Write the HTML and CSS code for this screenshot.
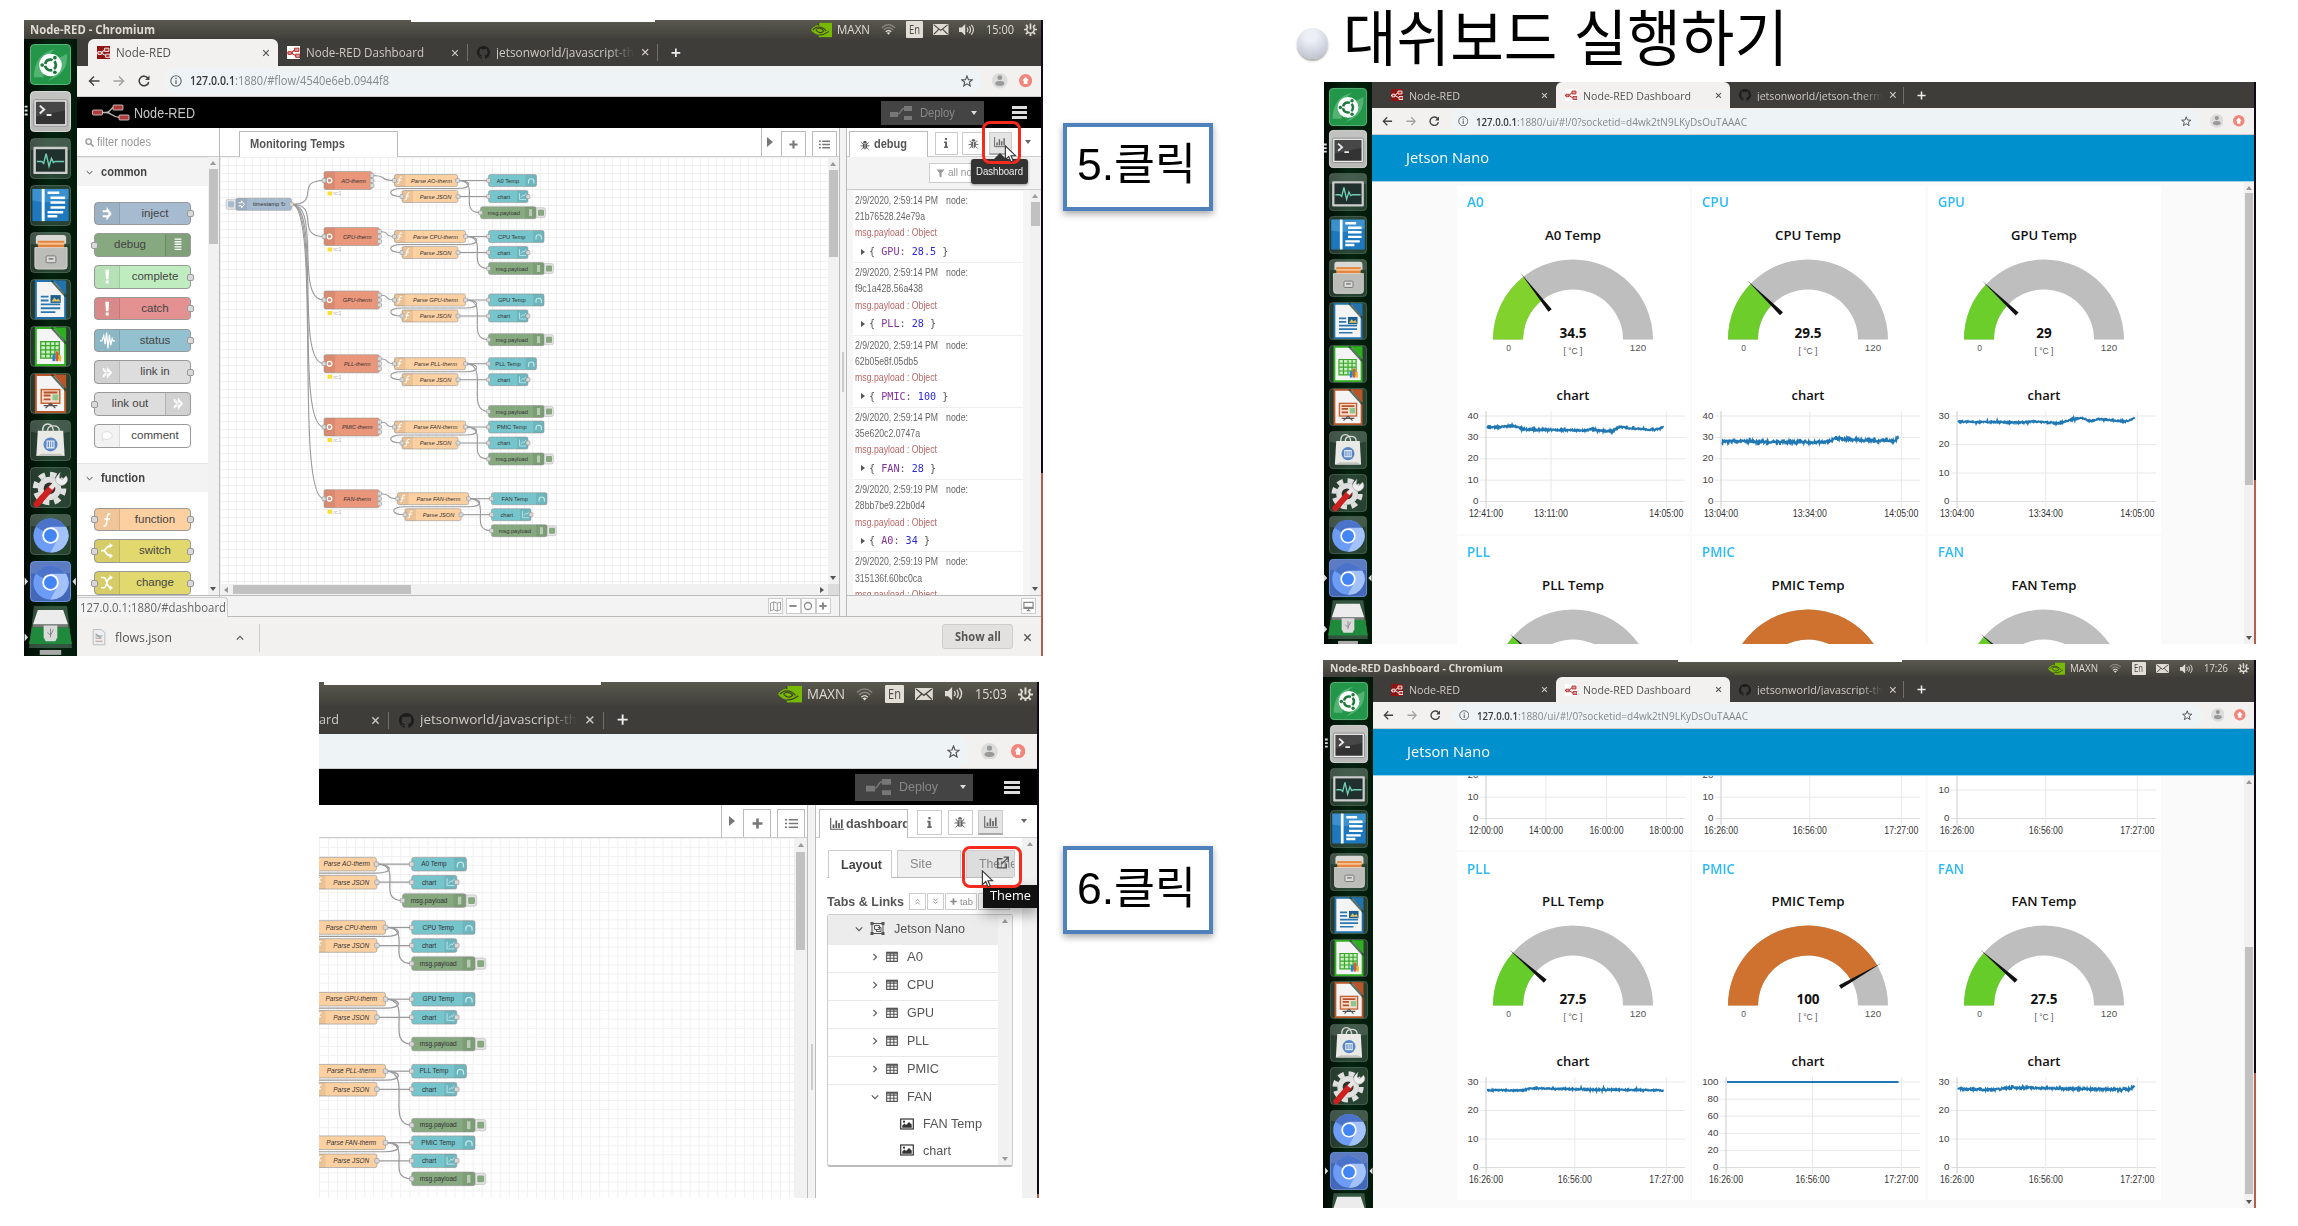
FILE: index.html
```html
<!DOCTYPE html>
<html lang="ko">
<head>
<meta charset="utf-8">
<title>대쉬보드 실행하기</title>
<link rel="stylesheet" href="styles.css">
</head>
<body>
<main class="slide">

  <section class="win win-editor">
    <header class="titlebar"><i class="strip"></i><b class="fit" data-w="125">Node-RED - Chromium</b><div class="indicators" data-time="15:00"></div></header>
    <div class="desk">
      <nav class="launcher"></nav>
      <div class="browser">
        <div class="tabs" data-tabs="editor"></div>
        <div class="toolbar" data-url="/#flow/4540e6eb.0944f8" data-host-w="45" data-path-w="154"></div>
        <div class="nr-header">
          <svg class="nr-logo" width="38" height="17" viewBox="0 0 38 17"><path d="M9 8.500H14C19 8.500 18 3.500 22 3.500M14 8.500C20 8.500 20 13.500 28 13.500" fill="none" stroke="#bbb" stroke-width="1.400"/><g fill="#b03a3a" stroke="#ddd" stroke-width=".8"><rect x=".5" y="6" width="10" height="5" rx="1"/><rect x="21" y="1" width="10" height="5" rx="1"/><rect x="27" y="11" width="10" height="5" rx="1"/></g></svg>
          <span class="fit" data-w="61">Node-RED</span>
          <div class="deploy"><i class="d-ico" data-ico="deploy" data-s="22"></i><span class="fit" data-w="35">Deploy</span><i class="caret"></i></div>
          <i class="burger"></i>
        </div>
        <div class="nr-main">
          <aside class="palette">
            <div class="search"><i data-ico="search" data-s="9"></i><span class="fit" data-w="54">filter nodes</span></div>
            <div class="pal-body">
              <div class="pal-list"></div>
              <div class="vscroll"><i class="up"></i><i class="thumb"></i><i class="down"></i></div>
            </div>
            <div class="foot"></div>
          </aside>
          <div class="workspace">
            <div class="ws-tabs"><div class="ws-tab"><b class="fit" data-w="95">Monitoring Temps</b></div><div class="ws-btns"><i class="tri"></i><div class="wbtn" data-ico="plus" data-s="9"></div><div class="wbtn" data-ico="list" data-s="11"></div></div></div>
            <div class="ws-body"><svg class="canvas"></svg><div class="vscroll"><i class="up"></i><i class="thumb"></i><i class="down"></i></div></div>
            <div class="hscroll"><i class="left"></i><i class="thumb"></i><i class="right"></i><i class="corner"></i></div>
            <div class="foot"><div class="fbtn" data-ico="map" data-s="11"></div><div class="fgroup"><div class="fbtn" data-ico="minus" data-s="8"></div><div class="fbtn" data-ico="ring" data-s="10"></div><div class="fbtn" data-ico="plus" data-s="8"></div></div></div>
          </div>
          <div class="divider"><i></i></div>
          <aside class="sidebar">
            <div class="sb-tabs"><div class="sb-tab"><i data-ico="bug" data-s="10"></i><b class="fit" data-w="33">debug</b></div><div class="sbtn" data-ico="info" data-s="10"></div><div class="sbtn" data-ico="bug" data-s="11"></div><div class="sbtn on" data-ico="bars" data-s="12"></div><i class="caret"></i></div>
            <div class="filter"><div><i data-ico="funnel" data-s="9"></i><span class="fit" data-w="24">all no</span></div></div>
            <div class="dbg"><div class="messages"></div><div class="vscroll"><i class="up"></i><i class="thumb"></i><i class="down"></i></div></div>
            <div class="foot"><div class="fbtn" data-ico="screen" data-s="11"></div></div>
          </aside>
        </div>
        <div class="downloads"><i data-ico="file" data-s="14"></i><span class="fit" data-w="57">flows.json</span><i class="chev" data-ico="chevup" data-s="8"></i><i class="sep"></i><div class="showall"><b class="fit" data-w="46">Show all</b></div><i data-ico="close" data-s="9"></i></div>
        <div class="bubble"><span class="fit" data-w="146">127.0.0.1:1880/#dashboard</span></div>
      </div>
    </div>
    <div class="tip tip-dash"><span class="fit" data-w="47">Dashboard</span></div>
    <div class="mark mark-5"></div>
    <i class="cursor cursor-5" data-ico="cursor" data-s="18"></i>
  </section>

  <section class="win win-side">
    <header class="titlebar"><i class="strip"></i><div class="indicators" data-time="15:03"></div></header>
    <div class="browser">
      <div class="tabs" data-tabs="side"></div>
      <div class="toolbar bare"></div>
      <div class="nr-header"><div class="deploy"><i class="d-ico" data-ico="deploy" data-s="25"></i><span class="fit" data-w="39">Deploy</span><i class="caret"></i></div><i class="burger"></i></div>
      <div class="nr-main">
        <div class="workspace">
          <div class="ws-tabs"><div class="ws-btns"><i class="tri"></i><div class="wbtn" data-ico="plus" data-s="11"></div><div class="wbtn" data-ico="list" data-s="13"></div></div></div>
          <div class="ws-body"><svg class="canvas"></svg><div class="vscroll"><i class="up"></i><i class="thumb"></i></div></div>
        </div>
        <div class="divider"><i></i></div>
        <aside class="sidebar">
          <div class="sb-tabs"><div class="sb-tab"><i data-ico="bars" data-s="14"></i><b class="fit" data-w="64">dashboard</b></div><div class="sbtn" data-ico="info" data-s="11"></div><div class="sbtn" data-ico="bug" data-s="12"></div><div class="sbtn on" data-ico="bars" data-s="14"></div><i class="caret"></i></div>
          <div class="sb-body">
            <div class="sb-panel">
              <div class="ltabs"><div class="ltab act"><b class="fit" data-w="41">Layout</b></div><div class="ltab"><span class="fit" data-w="22">Site</span></div><div class="ltab hov"><span class="fit" data-w="38">Theme</span><i data-ico="ext" data-s="13"></i></div></div>
              <div class="links"><b class="fit" data-w="77">Tabs &amp; Links</b><div class="lbtn" data-ico="dup" data-s="7"></div><div class="lbtn" data-ico="ddown" data-s="7"></div><div class="lbtn wide"><i data-ico="plus" data-s="7"></i><span class="fit" data-w="13">tab</span></div><div class="lbtn wide"></div></div>
              <div class="tree">
                <div class="rows">
                  <div class="row root"><i data-ico="chevdown" data-s="8"></i><i data-ico="group" data-s="15"></i><span class="fit" data-w="71">Jetson Nano</span></div>
                  <div class="row"><i data-ico="chevright" data-s="8"></i><i data-ico="table" data-s="12"></i><span class="fit" data-w="16">A0</span></div>
                  <div class="row"><i data-ico="chevright" data-s="8"></i><i data-ico="table" data-s="12"></i><span class="fit" data-w="27">CPU</span></div>
                  <div class="row"><i data-ico="chevright" data-s="8"></i><i data-ico="table" data-s="12"></i><span class="fit" data-w="27">GPU</span></div>
                  <div class="row"><i data-ico="chevright" data-s="8"></i><i data-ico="table" data-s="12"></i><span class="fit" data-w="22">PLL</span></div>
                  <div class="row"><i data-ico="chevright" data-s="8"></i><i data-ico="table" data-s="12"></i><span class="fit" data-w="32">PMIC</span></div>
                  <div class="row open"><i data-ico="chevdown" data-s="8"></i><i data-ico="table" data-s="12"></i><span class="fit" data-w="25">FAN</span></div>
                  <div class="row leaf"><i data-ico="image" data-s="14"></i><span class="fit" data-w="59">FAN Temp</span></div>
                  <div class="row leaf"><i data-ico="image" data-s="14"></i><span class="fit" data-w="28">chart</span></div>
                </div>
                <div class="vscroll"><i class="up"></i><i class="down"></i></div>
              </div>
            </div>
            <div class="vscroll"><i class="up"></i></div>
          </div>
        </aside>
      </div>
    </div>
    <div class="tip tip-theme"><span class="fit" data-w="41">Theme</span></div>
    <div class="mark mark-6"></div>
    <i class="cursor cursor-6" data-ico="cursor" data-s="18"></i>
  </section>

  <div class="callout c5"><span class="fit" data-w="119">5.클릭</span></div>
  <div class="callout c6"><span class="fit" data-w="119">6.클릭</span></div>

  <h1 class="heading"><i class="ball"></i><span class="fit" data-w="445">대쉬보드 실행하기</span></h1>

  <section class="win win-dash top">
    <div class="desk">
      <nav class="launcher"></nav>
      <div class="browser">
        <div class="tabs" data-tabs="dash1"></div>
        <div class="toolbar" data-url="/ui/#!/0?socketid=d4wk2tN9LKyDsOuTAAAC" data-host-w="41" data-path-w="230"></div>
        <div class="ui-header"><span class="fit" data-w="83">Jetson Nano</span></div>
        <div class="ui-body"><div class="cards" data-cards="first"></div><div class="vscroll"><i class="up"></i><i class="thumb"></i><i class="down"></i></div></div>
      </div>
    </div>
  </section>

  <section class="win win-dash bottom">
    <header class="titlebar"><i class="strip"></i><b class="fit" data-w="173">Node-RED Dashboard - Chromium</b><div class="indicators" data-time="17:26"></div></header>
    <div class="desk">
      <nav class="launcher"></nav>
      <div class="browser">
        <div class="tabs" data-tabs="dash2"></div>
        <div class="toolbar" data-url="/ui/#!/0?socketid=d4wk2tN9LKyDsOuTAAAC" data-host-w="41" data-path-w="230"></div>
        <div class="ui-header"><span class="fit" data-w="83">Jetson Nano</span></div>
        <div class="ui-body"><div class="cards" data-cards="second"></div><div class="vscroll"><i class="up"></i><i class="thumb"></i><i class="down"></i></div></div>
      </div>
    </div>
  </section>
</main>
<script src="app.js"></script>
</body>
</html>
```
FILE: styles.css
```css
* { box-sizing: border-box; }
body { margin: 0; background: #fff; font-family: "Liberation Sans", "Noto Sans CJK KR", sans-serif; line-height: 1; }
i { font-style: normal; display: block; flex: none; }
svg { display: block; flex: none; }
.fit { display: inline-block; white-space: nowrap; transform-origin: 0 50%; flex: none; }
.slide { position: relative; width: 2298px; height: 1226px; overflow: hidden; }

/* Screens placed on the slide */
.win { position: absolute; display: flex; flex-direction: column; overflow: hidden; background: #fff; }
.win::after { content: ""; position: absolute; right: 0; top: 0; bottom: 0; width: 2px; background: linear-gradient(#100814 0 var(--edge), #b0604c var(--edge)); }
.win-editor { left: 24px; top: 20px; width: 1019px; height: 636px; --edge: 453px; --tile: 41px; --tgap: 6px; --tabw: 190px; --fs: 12px; }
.win-side { left: 319px; top: 682px; width: 720px; height: 516px; --edge: 512px; --tabw: 215px; --fs: 13.5px; }
.win-dash { left: 1324px; width: 932px; --tile: 38px; --tgap: 4.9px; --tabw: 174px; --fs: 11px; }
.win-dash.top { top: 82px; height: 562px; --edge: 398px; }
.win-dash.bottom { left: 1323px; top: 660px; width: 933px; height: 548px; --edge: 413px; --tgap: 4.75px; }

.titlebar { position: relative; flex: none; height: 19px; display: flex; align-items: center; padding: 0 6px; background: linear-gradient(#5a594f, #403f3a); color: #dfdbd2; font: 12px/1 "Open Sans", "Noto Sans", sans-serif; }
.titlebar b { font-weight: 700; }
.strip { position: absolute; top: 0; height: 2px; background: #fff; }
.win-editor .strip { left: 387px; width: 244px; }
.win-side .strip { left: 5px; width: 277px; top: 0; height: 3px; }
.win-side .titlebar { height: 24px; }
.bottom .strip { left: 355px; width: 224px; }
.bottom .titlebar { height: 17px; font-size: 10.5px; padding: 0 7px; }
.indicators { margin-left: auto; display: flex; align-items: center; gap: 12px; }
.en { background: #e3dfd7; color: #4a4943; border-radius: 1px; display: flex; align-items: center; justify-content: center; }

.desk { flex: 1; display: flex; min-height: 0; }
.browser { position: relative; flex: 1; min-width: 0; display: flex; flex-direction: column; }
.launcher { position: relative; flex: none; width: 53px; background: linear-gradient(90deg, #010a04, #04240f 50%, #03190a); display: flex; flex-direction: column; gap: var(--tgap); padding: 5px 0 0 6px; overflow: hidden; }
.top .launcher { width: 48px; padding: 5.500px 0 0 5px; }
.bottom .launcher { width: 50px; padding: 5px 0 0 7px; }
.launcher svg { width: var(--tile); height: var(--tile); overflow: visible; }

.tabs { flex: none; height: 27px; display: flex; background: #3e3d39; color: #cdcac3; font: var(--fs)/1 "Open Sans", "Noto Sans", sans-serif; padding-left: 11px; }
.win-side .tabs { height: 28px; padding: 0; }
.top .tabs { height: 26px; padding-left: 10px; }
.bottom .tabs { height: 25px; padding-left: 9px; }
.tab { flex: none; width: var(--tabw); display: flex; align-items: center; gap: 6px; padding: 0 8px 0 9px; border-radius: 6px 6px 0 0; }
.tab.active { background: #f2f1f0; color: #55534e; }
.tab.line { border-right: 1px solid #706f68; border-radius: 0; height: 17px; align-self: center; }
.tab .x { margin-left: auto; }
.tab.first-cut { width: 70px; padding-left: 0; }
.win-side .tab.line { padding-left: 10px; }
.win-side .tab.first-cut { padding-left: 0; }
.fade { -webkit-mask-image: linear-gradient(90deg, #000 82%, transparent); mask-image: linear-gradient(90deg, #000 82%, transparent); }
.newtab { margin-left: 13px; align-self: center; color: #fff; }

.toolbar { flex: none; height: 31px; background: #f2f1f0; display: flex; align-items: center; border-bottom: 1px solid #ccc; font: var(--fs)/1 "Open Sans", "Noto Sans", sans-serif; padding-left: 4px; color: #444; }
.nav { width: 25px; display: flex; justify-content: center; }
.nav.off { opacity: .45; }
.addr { flex: none; width: 817px; height: 27px; margin-left: 9px; border-radius: 14px; background: #eef3f5; display: flex; align-items: center; padding: 0 9px 0 5px; color: #84898c; }
.addr b { color: #3a3a3a; font-weight: 600; margin-left: 7.500px; }
.addr .star { margin-left: auto; }
.avatar { margin-left: 10px; }
.upd { margin-left: 11px; }
.win-side .toolbar { height: 35px; padding: 0; }
.win-side .addr { width: 650px; margin: 0; height: 34px; border-radius: 0 17px 17px 0; }
.win-side .avatar { margin-left: 12px; }
.win-side .upd { margin-left: 13px; }
.win-dash .toolbar { height: 27px; }
.win-dash .nav { width: 23.2px; }
.win-dash .addr { width: 750px; margin-left: 5px; height: 23px; padding-left: 7px; }
.win-dash .avatar { margin-left: 9px; }
.win-dash .upd { margin-left: 10px; }

/* Flow editor */
.nr-header { flex: none; height: 31px; background: #000; color: #c7c7c7; display: flex; align-items: center; padding: 0 16px 0 15px; font-size: 14px; }
.nr-header > .fit { margin-left: 4px; }
.deploy { margin-left: auto; width: 103px; height: 24px; background: #444; color: #888; display: flex; align-items: center; padding: 0 7px 0 9px; font-size: 13.5px; }
.d-ico { margin-right: 8px; color: #777; }
.caret { width: 0; height: 0; border: 3.5px solid transparent; border-top: 4px solid currentColor; border-bottom: 0; margin-left: auto; }
.deploy .caret { color: #ddd; }
.burger { margin-left: 28px; width: 15px; height: 13px; background: repeating-linear-gradient(#ddd 0 2.6px, transparent 2.6px 5.200px); }
.win-side .nr-header { height: 36px; padding-right: 19px; }
.win-side .deploy { width: 118px; height: 27px; padding-left: 11px; font-size: 13.5px; }
.win-side .burger { margin-left: 31px; width: 16px; }
.nr-main { flex: 1; min-height: 0; display: flex; }
.win-editor .nr-main { flex: none; height: 489px; border-bottom: 1px solid #bbb; }
.palette { flex: none; width: 142.500px; border-right: 1px solid #bbb; display: flex; flex-direction: column; }
.search { flex: none; height: 29px; border-bottom: 1px solid #ccc; display: flex; align-items: center; gap: 3px; padding-left: 8px; color: #999; font-size: 12px; }
.pal-body { flex: 1; min-height: 0; display: flex; }
.pal-list { flex: 1; overflow: hidden; }
.foot { flex: none; height: 21px; background: #f3f3f3; border-top: 1px solid #bbb; display: flex; align-items: center; justify-content: flex-end; gap: 3px; }
.workspace .foot { padding-right: 8px; }
.sidebar .foot { padding-right: 5px; }
.fbtn { width: 15px; height: 16px; border: 1px solid #ccc; background: #fff; display: flex; align-items: center; justify-content: center; color: #888; }
.fgroup { display: flex; }
.cat { height: 29px; background: #f3f3f3; display: flex; align-items: center; gap: 8px; padding-left: 9px; font-size: 12.5px; font-weight: 700; color: #444; border-top: 1px solid #e6e6e6; }
.pnodes { display: flex; flex-direction: column; gap: 8.3px; padding: 15.5px 0 15.5px 17px; }
.pn { position: relative; width: 97px; height: 23.5px; border: 1.2px solid #999; border-radius: 4px; display: flex; align-items: stretch; font-size: 11.500px; color: #444; }
.pn .pi { width: 25px; background: rgba(0,0,0,.05); border-right: 1px solid rgba(0,0,0,.1); display: flex; align-items: center; justify-content: center; color: #fff; }
.pn.r { flex-direction: row-reverse; }
.pn.r .pi { border-right: 0; border-left: 1px solid rgba(0,0,0,.15); }
.pn .pl { flex: 1; display: flex; align-items: center; justify-content: center; }
.port { position: absolute; top: 7.5px; width: 7px; height: 7px; border: 1px solid #999; border-radius: 2px; background: #d9d9d9; }
.port.in { left: -4px; } .port.out { right: -4px; }

.vscroll { flex: none; width: 11px; background: #f1f1f1; display: flex; flex-direction: column; align-items: center; padding: 4px 0; }
.vscroll .up, .vscroll .down { width: 0; height: 0; border: 3px solid transparent; }
.vscroll .up { border-bottom: 4px solid #999; border-top: 0; }
.vscroll .down { border-top: 4px solid #555; border-bottom: 0; margin-top: auto; }
.vscroll .thumb { width: 9px; background: #c1c1c1; margin-top: 4px; }
.palette .thumb { height: 75px; } .workspace .thumb { height: 87px; }
.workspace { flex: none; width: 620px; display: flex; flex-direction: column; border-right: 1px solid #bbb; }
.ws-tabs { flex: none; height: 29px; border-bottom: 1px solid #ccc; display: flex; align-items: flex-end; padding-left: 19px; }
.ws-tab { width: 159px; height: 26px; border: 1px solid #bbb; border-bottom: 0; background: #fff; margin-bottom: -1px; display: flex; align-items: center; padding-left: 10px; font-size: 12.5px; color: #555; }
.ws-btns { margin-left: auto; height: 28px; border-left: 1px solid #bbb; display: flex; align-items: flex-end; padding: 0 2px 0 5px; }
.tri { width: 0; height: 0; border: 5px solid transparent; border-left: 6px solid #777; border-right: 0; align-self: center; margin-right: 8px; }
.wbtn { width: 25px; height: 25px; border: 1px solid #bbb; border-bottom: 0; margin-right: 6px; display: flex; align-items: center; justify-content: center; color: #777; }
.wbtn:last-child { margin-right: 0; }
.ws-body { flex: 1; min-height: 0; display: flex; }
.canvas { flex: 1; height: 100%; min-width: 0; }
.workspace .vscroll { padding-top: 5px; }
.hscroll { flex: none; height: 11px; background: #f1f1f1; display: flex; align-items: center; padding-left: 4px; }
.hscroll .left, .hscroll .right { width: 0; height: 0; border: 3px solid transparent; }
.hscroll .left { border-right: 4px solid #999; border-left: 0; }
.hscroll .right { border-left: 4px solid #555; border-right: 0; margin-left: auto; margin-right: 4px; }
.hscroll .thumb { width: 178px; height: 9px; background: #c1c1c1; margin-left: 5px; }
.corner { width: 11px; height: 11px; background: #dcdcdc; }
.divider { flex: none; width: 7px; background: #f3f3f3; display: flex; align-items: center; justify-content: center; border-right: 1px solid #bbb; }
.divider i { width: 2px; height: 40px; background: #ccc; }
.sidebar { flex: 1; min-width: 0; display: flex; flex-direction: column; padding-right: 2px; }
.sb-tabs { flex: none; height: 29px; border-bottom: 1px solid #ccc; display: flex; align-items: center; padding-left: 2px; color: #666; }
.sb-tab { width: 79px; height: 26px; border: 1px solid #bbb; border-bottom: 0; background: #fff; align-self: flex-end; margin-bottom: -1px; display: flex; align-items: center; gap: 4px; padding-left: 10px; margin-right: 7px; font-size: 12.5px; color: #555; overflow: hidden; }
.sbtn { width: 23px; height: 23px; border: 1px solid #ccc; display: flex; align-items: center; justify-content: center; margin: 2px 4px 0 0; }
.sbtn.on { background: #e4e4e4; border-bottom: 2px solid #aaa; }
.sb-tabs .caret { margin: 0 10px 0 auto; }
.filter { flex: none; height: 33px; background: #f3f3f3; border-bottom: 1px solid #ccc; padding: 6px 0 0 82px; }
.filter div { width: 60px; height: 20px; border: 1px solid #ccc; background: #fff; display: flex; align-items: center; gap: 3px; padding-left: 6px; font-size: 11.5px; color: #999; }
.dbg { flex: 1; min-height: 0; display: flex; background: #f5f5f5; }
.messages { flex: none; width: 170px; margin: 1px 7px 0 6px; background: #fff; overflow: hidden; }
.dbg .thumb { height: 24px; }
.msg { height: 72.3px; border-bottom: 1.500px solid #eee; padding: 2px 0 0 2px; font-size: 10px; line-height: 16.2px; color: #666; }
.msg > div { height: 16.2px; }
.msg .when { display: flex; gap: 8px; }
.msg .type { color: #b66; }
.msg .obj { display: flex; align-items: center; gap: 4px; padding-left: 6px; height: 20px; font: 11px/1 "DejaVu Sans Mono", "Liberation Mono", monospace; color: #555; }
.obj .k { color: #83319b; } .obj .v { color: #2b2bd8; }
.obj i { border: 3px solid transparent; border-left: 4px solid #555; border-right: 0; }
.downloads { flex: 1; background: #f2f1f0; display: flex; align-items: center; padding: 2px 11px 0 15px; font: 13px/1 "Open Sans", "Noto Sans", sans-serif; color: #555; }
.downloads > .fit { margin-left: 9px; }
.downloads .chev { margin-left: 64px; }
.downloads .sep { width: 1px; height: 28px; background: #ccc; margin-left: 15px; }
.showall { margin: -2px 10px 0 auto; width: 71px; height: 25px; border: 1px solid #cfcecc; border-radius: 3px; background: #e2e1df; display: flex; align-items: center; justify-content: center; font-size: 12px; }
.bubble { position: absolute; left: 0; bottom: 39px; width: 151px; height: 20px; background: #f3f3f3; border: 1px solid #ccc; border-width: 1px 1px 0 0; border-radius: 0 4px 0 0; display: flex; align-items: center; padding-left: 3px; font: 12px/1 "Open Sans", "Noto Sans", sans-serif; color: #666; }

/* Overlays on the editor screens */
.tip { position: absolute; display: flex; align-items: center; justify-content: center; color: #eee; }
.tip-dash { left: 947px; top: 139px; width: 57px; height: 25px; border-radius: 3px; background: #333; font-size: 10.500px; box-shadow: 0 1px 3px rgba(0,0,0,.4); }
.tip-dash::before { content: ""; position: absolute; left: 23px; top: -6px; border: 6px solid transparent; border-bottom-color: #333; border-top: 0; }
.tip-theme { left: 664px; top: 203px; width: 55px; height: 23px; background: #111; font: 12.5px/1 "Open Sans", "Noto Sans", sans-serif; color: #fff; box-shadow: 0 6px 14px rgba(0,0,0,.35); }
.mark { position: absolute; border: 3px solid #f52a1e; }
.mark-5 { left: 958px; top: 101px; width: 39px; height: 43px; border-radius: 8px; }
.mark-6 { left: 643px; top: 164px; width: 60px; height: 42px; border-radius: 8px; }
.cursor { position: absolute; }
.cursor-5 { left: 978px; top: 125px; }
.cursor-6 { left: 660px; top: 188px; }

/* Dashboard sidebar */
.win-side .workspace { width: 489px; }
.win-side .ws-tabs { height: 33px; }
.win-side .ws-btns { height: 32px; padding-left: 7px; padding-right: 2px; }
.win-side .wbtn { width: 28px; height: 28px; }
.win-side .vscroll { width: 13px; }
.win-side .workspace .thumb { height: 98px; margin-top: 5px; }
.win-side .divider { width: 8px; }
.win-side .divider i { height: 46px; margin-top: 130px; }
.win-side .sb-tabs { height: 33px; padding-left: 3px; }
.win-side .sb-tab { width: 89px; height: 29px; font-size: 13.5px; gap: 2px; margin-right: 9px; }
.win-side .sbtn { width: 25px; height: 25px; margin-right: 5.5px; }
.sb-body { flex: 1; display: flex; min-height: 0; }
.sb-body > .vscroll { width: 15px; margin-left: auto; }
.sb-panel { width: 197px; padding: 11.500px 0 0 11px; font-size: 13.500px; color: #555; }
.ltabs { display: flex; height: 28.500px; border-bottom: 1px solid #bbb; padding-left: 1px; gap: 5px; }
.ltab { position: relative; width: 64px; border: 1px solid #ccc; border-bottom: 0; background: #f0f0f0; display: flex; align-items: center; padding-left: 12px; overflow: hidden; color: #888; }
.ltab.act { background: #fff; margin-bottom: -1px; color: #444; }
.ltab.hov { width: 49px; background: #ddd; margin-right: -5px; }
.ltab.hov i { position: absolute; left: 29px; top: 5px; color: #555; }
.links { display: flex; align-items: center; height: 17px; margin: 15px 0 4px; gap: 1px; color: #555; }
.links > .fit { position: static; }
.links > .lbtn:nth-child(2) { margin-left: 4px; }
.lbtn { width: 17px; height: 17px; border: 1px solid #ccc; display: flex; align-items: center; justify-content: center; gap: 3px; font-size: 9.5px; color: #888; }
.lbtn.wide { width: 32px; }
.tree { display: flex; width: 186px; height: 253px; border: 1px solid #ccc; border-bottom: 2px solid #bbb; border-radius: 3px; }
.rows { flex: 1; font-size: 13.5px; }
.tree .vscroll { width: 14px; }
.tree .down { border-top-color: #999; }
.row { height: 28px; display: flex; align-items: center; padding: 0 0 3px 43px; border-bottom: 1px solid #e8e8e8; color: #555; }
.row i:first-child { width: 15px; }
.row .fit { margin-left: 9px; }
.row.root { height: 29.500px; background: #ececec; padding: 0 0 2px 27px; border: 0; }
.row.open { height: 26px; border: 0; padding-bottom: 1px; }
.row.leaf { height: 26.5px; border: 0; padding: 0 0 0 72px; }
.row.leaf i:first-child { width: 14px; }

/* Callouts and heading */
.callout { position: absolute; left: 1063px; width: 150px; height: 88px; border: 4px solid #4f81bd; background: #fff; box-shadow: 0 3px 7px rgba(0,0,0,.35); display: flex; align-items: center; padding: 0 0 3px 9.500px; font-size: 44px; color: #000; }
.c5 { top: 122.500px; } .c6 { top: 846px; }
.heading { position: absolute; left: 1297px; top: -4px; height: 76px; margin: 0; display: flex; align-items: center; gap: 15px; font: 400 61px/1 "Noto Sans CJK KR", sans-serif; }
.ball { width: 31px; height: 31px; border-radius: 50%; margin-top: 18px; background: radial-gradient(circle at 45% 25%, #eceff5 0 20%, #d3d7e1 55%, #c3c8d4 75%, #a9adb6); box-shadow: 0 2px 2px #aaa; }

/* Dashboard pages */
.ui-header { flex: none; height: 47px; background: #0090ce; color: #fff; display: flex; align-items: center; padding-left: 34px; font: 14px/1 "Open Sans", "Noto Sans", sans-serif; border-bottom: 1px solid #9fd3ea; }
.ui-body { flex: 1; min-height: 0; overflow: hidden; background: #fafafa; display: flex; justify-content: space-between; padding-right: 2px; }
.cards { flex: none; display: grid; grid-template-columns: repeat(3, 233px); grid-auto-rows: 347.700px; gap: 2.300px; margin: 4px 0 0 85px; align-self: flex-start; }
.bottom .cards { margin: -273.500px 0 0 84px; }
.card { background: #fff; display: flex; flex-direction: column; }
.card h3 { margin: 0; height: 34px; padding-left: 10px; display: flex; align-items: center; font: 600 13.5px/1 "Open Sans", "Noto Sans", sans-serif; color: #2dbbf8; }
.ui-body > .vscroll { width: 10px; align-self: stretch; }
.top .ui-body .thumb { height: 292px; margin-top: 3px; width: 8px; }
.bottom .ui-body .thumb { height: 247px; margin-top: 163px; width: 8px; }
```
FILE: app.js
```js
const BASE = '#d9d9d9';
const ICONS = {
  search: ['0 0 10 10', '<circle cx="4" cy="4" r="3" fill="none" stroke="currentColor" stroke-width="1.500"/><path d="M6.200 6.200L9.500 9.500" stroke="currentColor" stroke-width="1.700"/>'],
  deploy: ['0 0 22 14', '<path d="M0 6H8V11H0ZM14 0H22V5H14ZM14 10H22V14H14Z" fill="currentColor"/><path d="M8 8C11 8 10.500 2.500 14 2.500" fill="none" stroke="currentColor" stroke-width="1.300"/>'],
  plus: ['0 0 10 10', '<path d="M5 .5V9.500M.5 5H9.500" stroke="currentColor" stroke-width="2.400"/>'],
  thinplus: ['0 0 10 10', '<path d="M5 .5V9.500M.5 5H9.500" stroke="#eee" stroke-width="1.700"/>'],
  minus: ['0 0 10 10', '<path d="M.5 5H9.500" stroke="currentColor" stroke-width="2.400"/>'],
  ring: ['0 0 10 10', '<circle cx="5" cy="5" r="3.500" fill="none" stroke="currentColor" stroke-width="1.300"/>'],
  list: ['0 0 12 12', '<path d="M3.500 2.500H12M3.500 6H12M3.500 9.500H12M0 2.500H2M0 6H2M0 9.500H2" stroke="currentColor" stroke-width="1.500"/>'],
  map: ['0 0 12 12', '<path d="M.5 2.500L4 1L8 2.500L11.500 1V9.500L8 11L4 9.500L.5 11ZM4 1V9.500M8 2.500V11" fill="none" stroke="currentColor" stroke-width=".9"/>'],
  bug: ['0 0 12 12', '<path d="M3.800 3.500A2.200 2.500 0 0 1 8.200 3.500Z" fill="currentColor"/><path d="M3.500 4.200H8.500V8.500Q8.500 11 6 11.300Q3.500 11 3.500 8.500Z" fill="currentColor"/><path d="M.5 7H11.500M1.500 3L3.800 5M10.500 3L8.200 5M1.500 11.300L4 9M10.500 11.300L8 9" stroke="currentColor" stroke-width="1"/><path d="M6 4.500V11" stroke="#fff" stroke-width=".8"/>'],
  info: ['0 0 10 10', '<path d="M4 0H6V2H4ZM3 3.500H6V8.500H7V10H3V8.500H4V5H3Z" fill="currentColor"/>'],
  bars: ['0 0 14 12', '<path d="M.7 0V11.300H14" fill="none" stroke="currentColor" stroke-width="1.100"/><path d="M3.500 10V6.500M6.300 10V2.500M9 10V5M11.800 10V1.500" stroke="currentColor" stroke-width="1.700"/>'],
  funnel: ['0 0 10 10', '<path d="M.5 .5H9.500L6.200 4.500V9.800L3.800 8V4.500Z" fill="currentColor"/>'],
  screen: ['0 0 12 12', '<path d="M1 1.500H11V8H1ZM1 7H11M4 10.500H8M6 8V10.500" fill="none" stroke="currentColor" stroke-width="1.300"/>'],
  file: ['0 0 12 14', '<path d="M1 .5H8L11 3V13.500H1Z" fill="#eceff2" stroke="#b9b9b9" stroke-width=".8"/><path d="M3 4L8 8M3 8H8M3 10.500H9" stroke="#b98" stroke-width=".9"/><path d="M3 6H9" stroke="#79a" stroke-width=".8"/>'],
  chevup: ['0 0 10 10', '<path d="M1 7L5 3L9 7" fill="none" stroke="currentColor" stroke-width="1.400"/>'],
  chevdown: ['0 0 10 10', '<path d="M1 3L5 7L9 3" fill="none" stroke="currentColor" stroke-width="1.400"/>'],
  chevright: ['0 0 10 10', '<path d="M3 1L7 5L3 9" fill="none" stroke="currentColor" stroke-width="1.400"/>'],
  dup: ['0 0 10 10', '<path d="M2 5L5 2L8 5M2 9L5 6L8 9" fill="none" stroke="currentColor" stroke-width="1.200"/>'],
  ddown: ['0 0 10 10', '<path d="M2 1L5 4L8 1M2 5L5 8L8 5" fill="none" stroke="currentColor" stroke-width="1.200"/>'],
  close: ['0 0 10 10', '<path d="M1.500 1.500L8.500 8.500M8.500 1.500L1.500 8.500" stroke="currentColor" stroke-width="1.500"/>'],
  cursor: ['0 0 16 16', '<path d="M3 .8V13L6 10.200L8 15L10 14.200L8 9.500H12Z" fill="#fff" stroke="#333" stroke-width="1"/>'],
  ext: ['0 0 12 12', '<path d="M6 2.500H1.500V11H9.500V7M5 7.500L11 1.500M7 1H11.300V5.200" fill="none" stroke="currentColor" stroke-width="1.300"/>'],
  group: ['0 0 15 13', '<path d="M2 1.500H13V11.500H2Z" fill="none" stroke="currentColor" stroke-width="1"/><path d="M4.500 3.500H9.500V7.500H4.500ZM8 5.500H11V9.500H6.500V7.500" fill="none" stroke="currentColor" stroke-width="1"/><path d="M.5 0H3.500V3H.5ZM11.500 0H14.500V3H11.500ZM.5 10H3.500V13H.5ZM11.500 10H14.500V13H11.500Z" fill="currentColor"/>'],
  table: ['0 0 13 12', '<path d="M.7 1.500H12.300V11.300H.7ZM.7 4.500H12.300M.7 7.800H12.300M4.500 1.500V11.300M8.500 1.500V11.300" fill="none" stroke="currentColor" stroke-width="1.200"/><path d="M.5 1H12.500V3H.5Z" fill="currentColor"/>'],
  image: ['0 0 14 12', '<rect x=".7" y="1" width="12.600" height="10" fill="none" stroke="#333" stroke-width="1.200"/><path d="M2.300 9.800V7.500L4.500 5.500L6 7L9 4L11.700 6.500V9.800Z" fill="#333"/><circle cx="4" cy="3.700" r="1.100" fill="#333"/>'],
  back: ['0 0 12 12', '<path d="M11.500 6H1.500M6 1.500L1.500 6L6 10.500" fill="none" stroke="#444" stroke-width="1.500"/>'],
  fwd: ['0 0 12 12', '<path d="M.5 6H10.500M6 1.500L10.500 6L6 10.500" fill="none" stroke="#444" stroke-width="1.500"/>'],
  reload: ['0 0 12 12', '<path d="M10 3.300A4.800 4.800 0 1 0 10.700 7" fill="none" stroke="#444" stroke-width="1.600"/><path d="M11.500 .5V5H7Z" fill="#444"/>'],
  iinfo: ['0 0 12 12', '<circle cx="6" cy="6" r="5.200" fill="none" stroke="#666" stroke-width="1.100"/><path d="M6 5.200V9M6 2.800V4.200" stroke="#666" stroke-width="1.300"/>'],
  star: ['0 0 12 12', '<path d="M6 .9L7.400 4.600L11.300 4.800L8.300 7.200L9.300 11L6 8.900L2.700 11L3.700 7.200L.7 4.800L4.600 4.600Z" fill="none" stroke="#555" stroke-width="1.100"/>'],
  avatar: ['0 0 16 16', '<circle cx="8" cy="8" r="8" fill="#dcdcdc"/><circle cx="8" cy="4.800" r="2.500" fill="#999"/><ellipse cx="8" cy="10.700" rx="4.600" ry="2.500" fill="#999"/>'],
  upd: ['0 0 14 14', '<circle cx="7" cy="7" r="7" fill="#f2857b"/><path d="M7 3L10.500 7H9V10.500H5V7H3.500Z" fill="#fff"/>'],
  nred: ['0 0 12 12', '<rect width="12" height="12" fill="#8f1414"/><path d="M0 6.500H3C6 6.500 5 3.500 8 3.500M3 6.500C6 6.500 6 9 9 9" fill="none" stroke="#eee" stroke-width="1"/><path d="M7 2H11V5H7ZM8 7.500H12V10.500H8ZM1 5.200H4V7.800H1Z" fill="#b33" stroke="#fff" stroke-width=".8"/>'],
  ndash: ['0 0 12 12', '<rect width="12" height="12" fill="#fff"/><path d="M0 6.500H3C6 6.500 5 3.500 8 3.500M3 6.500C6 6.500 6 9 9 9" fill="none" stroke="#b22" stroke-width="1"/><path d="M7 2H11V5H7ZM8 7.500H12V10.500H8ZM1 5.200H4V7.800H1Z" fill="#d99" stroke="#b22" stroke-width=".8"/>'],
  hub: ['0 0 16 16', '<path d="M8 0C3.600 0 0 3.600 0 8c0 3.500 2.300 6.500 5.500 7.600.4.100.5-.2.500-.4v-1.500C3.800 14.200 3.300 13 3.300 13c-.4-.9-.9-1.200-.9-1.200-.7-.5.100-.5.100-.5.800.1 1.200.8 1.200.8.700 1.200 1.900.9 2.300.7.100-.5.300-.9.500-1.100-1.800-.2-3.600-.9-3.600-4 0-.9.300-1.600.8-2.100-.1-.2-.4-1 .1-2.100 0 0 .7-.2 2.200.8.600-.2 1.300-.3 2-.3s1.400.1 2 .3c1.500-1 2.200-.8 2.200-.8.400 1.100.2 1.900.1 2.100.5.600.8 1.300.8 2.100 0 3.100-1.900 3.700-3.700 3.900.3.300.6.800.6 1.500v2.200c0 .2.100.5.500.4C13.700 14.500 16 11.500 16 8c0-4.400-3.600-8-8-8z" fill="#1d1d1c"/>'],
  nvidia: ['0 0 22 15', '<path d="M8 0H22V15H8Z" fill="#76b900"/><path d="M0 7.500C3 3 7 2 11 2.500C15 3 18 6 19.500 8.500C16 13 12 13.500 8 12.500C4 12 2 10 0 7.500Z" fill="#76b900"/><path d="M8 0V3M2 7.500C5 3.500 11 3 16 8.500M5 7.500C7 5 11 5 13.500 8.500C11 11 8 11 5 7.500M8 12.500C13 13.500 17 10 18.500 9" fill="none" stroke="#40402f" stroke-width="1.100"/>'],
  wifi: ['0 0 16 13', '<g fill="none" stroke="#8f8c85" stroke-width="1.300"><path d="M1 5Q8 -1.500 15 5"/><path d="M3 7.300Q8 2.500 13 7.300"/><path d="M5 9.500Q8 6.500 11 9.500" stroke="#dfdbd2"/></g><path d="M8 12.500L6 10.500Q8 9 10 10.500Z" fill="#dfdbd2"/>'],
  mail: ['0 0 17 12', '<rect width="17" height="12" rx="1" fill="#dfdbd2"/><path d="M1 1L8.500 7L16 1M1 11L6.500 5.500M16 11L10.500 5.500" fill="none" stroke="#45443e" stroke-width="1.200"/>'],
  vol: ['0 0 18 13', '<path d="M0 4H3L7 0V13L3 9H0Z" fill="#dfdbd2"/><path d="M9 4Q11 6.500 9 9M11.500 2.500Q14.500 6.500 11.500 10.500M14 1Q18.500 6.500 14 12" fill="none" stroke="#dfdbd2" stroke-width="1.300"/>'],
  cog: ['0 0 15 15', '<path d="M4.800 4A4.300 4.300 0 1 0 10.200 4" fill="none" stroke="#dfdbd2" stroke-width="1.800"/><path d="M7.500 .5V7.500M0 7.500H3M12 7.500H15M2.200 12.800L4.300 10.700M12.800 12.800L10.700 10.700M7.500 12V15M2.200 2.200L4 4M12.800 2.200L11 4" stroke="#dfdbd2" stroke-width="2"/>'],
  arrow: ['0 0 14 18', '<path d="M6.500 1L12.500 9L6.500 17V13H2V10.800H8.500V7.200H2V5H6.500Z" fill="#fff"/>'],
  lines: ['0 0 14 18', '<path d="M3 2.500H11M3 5.500H11M3 8.500H11M3 11.500H11M3 14.500H11" stroke="#fff" stroke-width="1.600"/>'],
  bang: ['0 0 14 18', '<path d="M5 1H9.500L8.700 12H5.800ZM5.500 13.500H9V17H5.500Z" fill="#fff"/>'],
  pulse: ['0 0 16 18', '<path d="M0 9.500H2L4 4L5.500 13L7 .5L8.500 17.500L10 3L11.500 14L13 7L14 9.500H16" fill="none" stroke="#fff" stroke-width="1.300"/>'],
  link: ['0 0 14 18', '<path d="M2 3L7 6V2L13 9L7 16V12L2 15V12L5 9L2 6Z" fill="#fff"/><path d="M5 9H10M4 5.500L9 9L4 12.500" fill="none" stroke="#ccc" stroke-width=".8"/>'],
  talk: ['0 0 14 14', '<path d="M7 2C10.500 2 13 4 13 6.500S10.500 11 7 11C6 11 5 10.900 4 10.500L1.500 12.500L2.300 9.500C1.300 8.500 1 7.500 1 6.500C1 4 3.500 2 7 2Z" fill="#fff" stroke="#ccc" stroke-width=".8"/>'],
  fx: ['0 0 14 18', '<path d="M11 2.500C8 1 7.500 4 7.200 7L6.500 13C6 16.500 4.500 17 3 15.800M4 8H10.500" fill="none" stroke="#fff" stroke-width="1.800"/>'],
  swi: ['0 0 14 18', '<path d="M0 9H3C6 9 5 3 12 3M3 9C6 9 5 15 12 15" fill="none" stroke="#fff" stroke-width="2"/><path d="M10 0L14 3L10 6ZM10 12L14 15L10 18Z" fill="#fff"/>'],
  chg: ['0 0 14 18', '<path d="M0 3H3C8 3 5 15 12 15M0 15H3C8 15 5 3 12 3" fill="none" stroke="#fff" stroke-width="1.800"/><path d="M10 0L14 3L10 6ZM10 12L14 15L10 18Z" fill="#fff"/>']
};
function ico(name, w, h) {
  const [vb, body] = ICONS[name];
  const [, , vw, vh] = vb.split(' ').map(Number);
  return `<svg width="${w}" height="${h || w * vh / vw}" viewBox="${vb}">${body}</svg>`;
}
const fit = (text, w, tag = 'span', cls = '') => `<${tag} class="fit ${cls}" data-w="${w}">${text}</${tag}>`;
const $$ = (sel, root = document) => [...root.querySelectorAll(sel)];

$$('[data-ico]').forEach(el => { el.innerHTML = ico(el.dataset.ico, +el.dataset.s); });

/* Launcher */
const tile = (fill = 'rgba(190,215,200,.2)', stroke = 'rgba(200,220,205,.28)') => `<rect x=".5" y=".5" width="41" height="41" rx="4" fill="${fill}" stroke="${stroke}"/>`;
const gloss = '<path d="M1 4Q1 1 4 1H38Q41 1 41 4V12Q21 17 1 12Z" fill="#fff" opacity=".13"/>';
const doc = (c, inner) => tile() + `<path d="M6 2H26L36 14V40H6Z" fill="#f4f4f4" stroke="${c}" stroke-width="2"/><path d="M24 1.500H37V16Z" fill="${c}"/><path d="M22 1.500L37 18" stroke="#1d3a2a" stroke-width="2.500" opacity=".7"/>` + inner;
const chromium = active => (active ? tile('#4468b8', '#6f93d8') : tile()) + gloss +
  '<circle cx="21" cy="22" r="17.500" fill="#6c9cf5"/><path d="M21 22L6 13A17.500 17.500 0 0 1 38 18Z" fill="#4a73c9"/><path d="M21 13H37A17.500 17.500 0 0 1 21 39.500L28 26Z" fill="#a3c2fb"/><circle cx="21" cy="22" r="8.500" fill="#fff"/><circle cx="21" cy="22" r="6.600" fill="#4285f4"/>';
const TILES = [
  tile('#23964a', '#5dbb7c') + '<path d="M4 34Q4 10 26 5Q12 14 14 34ZM38 10Q40 30 18 38Q30 30 30 14Z" fill="#8fd6a5" opacity=".45"/><circle cx="21" cy="21.500" r="11.500" fill="#fff"/><circle cx="21" cy="21.500" r="5.500" fill="none" stroke="#1d7a3c" stroke-width="2.800" stroke-dasharray="9.500 2" stroke-dashoffset="5"/><g fill="#1d7a3c"><circle cx="12.500" cy="21.500" r="1.900"/><circle cx="25.500" cy="14" r="1.900"/><circle cx="25.500" cy="29" r="1.900"/></g>',
  tile('#b9b9b7', '#dcdcda') + gloss + '<rect x="4" y="9" width="34" height="27" rx="1" fill="#eee" stroke="#888"/><rect x="6" y="11" width="30" height="23" fill="#333"/><path d="M6 11H36V20L6 26Z" fill="#fff" opacity=".1"/><path d="M10 15L14.500 19L10 23M17 24.500H22" fill="none" stroke="#eee" stroke-width="2"/>',
  tile() + gloss + '<rect x="3.500" y="9" width="35" height="28" rx="1" fill="#ccc"/><rect x="6" y="11.500" width="30" height="23" fill="#20302d"/><path d="M7 24H12L14 26L16.500 16L19.500 29L22 21L24 25L26 24H35" fill="none" stroke="#6fcdb3" stroke-width="1.500"/>',
  tile() + '<rect x="2.500" y="4" width="37" height="33" fill="#1d78bf"/><path d="M2.500 4H39.500V14Q20 20 2.500 16Z" fill="#5aa7df" opacity=".5"/><path d="M12 4H15V37H12Z" fill="#fff"/><path d="M18 8H30M21 13H36M21 18H36M21 23H36M18 28H34M18 32H28" stroke="#fff" stroke-width="2.600"/>',
  tile() + gloss + '<path d="M6 6Q6 3 9 3H34Q37 3 37 6V12H6Z" fill="#d8d8d4"/><path d="M8 9H35V17H8Z" fill="#e5843f"/><path d="M8 11H35V13H8Z" fill="#f5c48f"/><path d="M5 16H38V35Q38 38 35 38H8Q5 38 5 35Z" fill="#bcbcb8" stroke="#e2e2de" stroke-width=".8"/><rect x="16.500" y="24.500" width="10" height="7" rx="1" fill="#d9d9d5" stroke="#777"/><path d="M19 27.500H24" stroke="#777" stroke-width="1.500"/>',
  doc('#2273ad', '<path d="M11 18H19M11 22H19M11 26H31M11 30H31M11 34H26" stroke="#2a78b2" stroke-width="1.900"/><rect x="21" y="16.500" width="10.500" height="8" fill="#1d5f91"/><path d="M22 23L25 19L27 21.500L29 20L31 23Z" fill="#e8c35a"/>'),
  doc('#2fae1f', '<rect x="11" y="16" width="19" height="17" fill="#c7efc0"/><path d="M11 16H30V33H11ZM11 20.200H30M11 24.500H30M11 28.700H30M16 16V33M21 16V33M25.500 16V33" fill="none" stroke="#3aa52a" stroke-width="1.300"/><path d="M23 36V29H26V36Z" fill="#2d7fd0"/><path d="M26.500 36V26H29V36Z" fill="#e4572e"/><path d="M29.500 36V30H32V36Z" fill="#f1b82d"/>'),
  doc('#b8562a', '<rect x="11.500" y="17" width="19" height="14" fill="#f8ddd0" stroke="#c8632f" stroke-width="1.500"/><path d="M14 23H21M14 27H21M14 20H28" stroke="#b4532a" stroke-width="2"/><rect x="23" y="22" width="6" height="6" fill="#8ec78b"/><path d="M21 31L16 36M21 31L26 36M14 33.500H28" stroke="#555" stroke-width="1.300"/>'),
  tile() + gloss + '<path d="M13 11Q13 4 18 4T24 11M18 11Q18 6 24 6T30 11" fill="none" stroke="#d9dbd8" stroke-width="1.500"/><path d="M8 11H34L35.500 37H6.500Z" fill="#e9e9e6"/><path d="M6.500 37L12 34.500H31L35.500 37Z" fill="#c4c4c0"/><circle cx="21" cy="25" r="7.200" fill="#5b87c5"/><path d="M17.500 21.500H24.500V28.500H17.500ZM20 21.500V28.500M22.200 21.500V28.500" fill="none" stroke="#e6eefa" stroke-width="1.200"/>',
  tile() + '<circle cx="20" cy="22" r="12" fill="#dfdfdf"/><circle cx="20" cy="22" r="14.500" fill="none" stroke="#dfdfdf" stroke-width="5.500" stroke-dasharray="6.400 5"/><circle cx="20" cy="22" r="6" fill="#26352c"/><path d="M7 38L22 21" stroke="#cf2020" stroke-width="6.500" stroke-linecap="round"/><path d="M21 22L29 13" stroke="#e6e6e6" stroke-width="4.500"/><path d="M27 10A6 6 0 1 0 37 9L33 13L30 11L31 5.500" fill="#eee" stroke="#999" stroke-width=".6"/>',
  chromium(false), chromium(true),
  '<path d="M4 -2H38L43 41H-1Z" fill="#557a62" opacity=".6"/><path d="M8 2H34L39 17H3Z" fill="#ececec"/><path d="M3 17H39V20H3Z" fill="#777"/><path d="M2 20H40L43 37H-1Z" fill="#1f8a3c"/><path d="M14 18H28V30L26 34H16L14 30Z" fill="#dadada"/><path d="M21 21V30M18 25L21 28L24 22" stroke="#888" fill="none"/><path d="M10 43H32V48H10Z" fill="#aaa"/>'
];
$$('.launcher').forEach(nav => {
  const mark = i => {
    if (i === 1) return '<path d="M-5.500 16H-2.500M-5.500 20H-2.500M-5.500 24H-2.500" stroke="#ddd" stroke-width="2"/>';
    if (i === 11) return '<path d="M-5.500 17L-2 21L-5.500 25ZM47 17L43.500 21L47 25Z" fill="#ddd"/>';
    if (i === 12) return '<path d="M-5.500 26L-2 30L-5.500 34Z" fill="#ddd"/>';
    return '';
  };
  nav.innerHTML = TILES.map((t, i) => `<svg viewBox="0 0 42 42">${t}${mark(i)}</svg>`).join('');
});

/* Status indicators */
$$('.indicators').forEach(el => {
  const big = el.closest('.win-side'), small = el.closest('.bottom');
  const k = big ? 1.15 : small ? .84 : 1;
  const m = w => Math.round(w * k);
  el.style.gap = (big ? 11.5 : small ? 10.5 : 10.5) + 'px';
  el.innerHTML = `<div style="display:flex;align-items:center;gap:5px">${ico('nvidia', 21 * k, 16 * k)}${fit('MAXN', m(33))}</div>` +
    ico('wifi', 15 * k) + `<div class="en" style="width:${16.5 * k}px;height:${16.5 * k}px">${fit('En', m(11))}</div>` +
    ico('mail', 15.5 * k) + ico('vol', 16 * k) + fit(el.dataset.time, m(28)) + ico('cog', 13 * k);
  el.style.fontSize = 12 * k + 'px';
});

/* Tab strips */
const close = s => `<span class="x">${ico('close', s)}</span>`;
const hub = (text, w, s) => `<div class="tab line">${ico('hub', s)}<div class="fade">${fit(text, w)}</div>${close(s * .65)}</div><div class="newtab">${ico('thinplus', s * .75)}</div>`;
const TABS = {
  editor: `<div class="tab active">${ico('nred', 13)}${fit('Node-RED', 55)}${close(8)}</div><div class="tab line">${ico('ndash', 13)}${fit('Node-RED Dashboard', 118)}${close(8)}</div>` + hub('jetsonworld/javascript-th', 138, 13),
  side: `<div class="tab line first-cut">${fit('ard', 20)}${close(9)}</div>` + hub('jetsonworld/javascript-th', 157, 15),
  dash1: `<div class="tab">${ico('nred', 12)}${fit('Node-RED', 51)}${close(7)}</div><div class="tab active">${ico('ndash', 12)}${fit('Node-RED Dashboard', 108)}${close(7)}</div>` + hub('jetsonworld/jetson-therm', 126, 12),
  dash2: `<div class="tab">${ico('nred', 12)}${fit('Node-RED', 51)}${close(7)}</div><div class="tab active">${ico('ndash', 12)}${fit('Node-RED Dashboard', 108)}${close(7)}</div>` + hub('jetsonworld/javascript-th', 126, 12)
};
$$('.tabs').forEach(el => { el.innerHTML = TABS[el.dataset.tabs]; });

/* Address bars */
$$('.toolbar').forEach(el => {
  const big = el.classList.contains('bare'), s = big ? 13 : el.closest('.win-dash') ? 10.5 : 12;
  const url = el.dataset.url ? ico('iinfo', s) + fit('127.0.0.1', el.dataset.hostW, 'b') + fit(':1880' + el.dataset.url, el.dataset.pathW) : '';
  const nav = big ? '' : `<div class="nav">${ico('back', s)}</div><div class="nav off">${ico('fwd', s)}</div><div class="nav">${ico('reload', s)}</div>`;
  el.innerHTML = nav + `<div class="addr">${url}<span class="star">${ico('star', s)}</span></div><div class="avatar">${ico('avatar', s * 1.3)}</div><div class="upd">${ico('upd', s * 1.1)}</div>`;
});

/* Palette */
const PAL = [['common', 46, [['inject', '#a6bbcf', 'arrow', 0, 1], ['debug', '#87a980', 'lines', 1, 0], ['complete', '#c0edc0', 'bang', 0, 1], ['catch', '#e49191', 'bang', 0, 1], ['status', '#94c1d0', 'pulse', 0, 1], ['link in', '#ddd', 'link', 0, 1], ['link out', '#ddd', 'link', 1, 0], ['comment', '#fff', 'talk', 0, 0]]],
  ['function', 44, [['function', '#fdd0a2', 'fx', 1, 1], ['switch', '#e2d96e', 'swi', 1, 1], ['change', '#e2d96e', 'chg', 1, 1]]]];
document.querySelector('.pal-list').innerHTML = PAL.map(([name, w, nodes]) =>
  `<div class="cat">${ico('chevdown', 7)}${fit(name, w)}</div><div class="pnodes">` + nodes.map(([label, color, icon, inp, out]) =>
    `<div class="pn${inp && !out ? ' r' : ''}" style="background:${color}"><div class="pi">${ico(icon, icon === 'pulse' ? 15 : 12)}</div><div class="pl">${label}</div>${inp ? '<i class="port in"></i>' : ''}${out ? '<i class="port out"></i>' : ''}</div>`).join('') + '</div>').join('');

/* Debug messages */
const MSG = [['14', '21b76528.24e79a', 70, 'GPU', '28.5'], ['14', 'f9c1a428.56a438', 68, 'PLL', '28'], ['14', '62b05e8f.05db5', 63, 'PMIC', '100'], ['14', '35e620c2.0747a', 65, 'FAN', '28'], ['19', '28bb7be9.22b0d4', 70, 'A0', '34'], ['19', '315136f.60bc0ca', 67]];
document.querySelector('.messages').innerHTML = MSG.map(([s, id, w, k, v]) =>
  `<div class="msg"><div class="when">${fit(`2/9/2020, 2:59:${s} PM`, 83)}${fit('node:', 22)}</div><div>${fit(id, w)}</div><div>${fit('msg.payload : Object', 82, 'span', 'type')}</div>` +
  (k ? `<div class="obj"><i></i>${fit(`{ <span class="k">${k}</span>: <span class="v">${v}</span> }`, 6.1 * (k.length + v.length + 6))}</div>` : '') + '</div>').join('');

/* Flow canvas */
function wire(x1, y1, x2, y2) {
  const d = Math.min(30, .75 * Math.hypot(x2 - x1, y2 - y1));
  return `<path d="M${x1} ${y1}C${x1 + d} ${y1} ${x2 - d} ${y2} ${x2} ${y2}"/>`;
}
const port = (x, y) => `<rect x="${x - 2}" y="${y - 2}" width="4" height="4" rx="1" fill="${BASE}" stroke="#999" stroke-width=".6"/>`;
function node(x, x2, cy, h, color, label, o = {}) {
  const y = cy - h / 2, iw = 11;
  const ix = o.right ? x2 - iw : x;
  const tx = o.right ? (x + x2 - iw) / 2 + 1 : (x + iw + x2) / 2;
  const c = ix + iw / 2;
  const glyph = {
    fx: `<path d="M${c + 2} ${cy - 3.5}q-2-1-2.300 1.500l-.6 3.500q-.3 2.500-2 1.500M${c - 2} ${cy - .5}h3.500" stroke-width="1"/>`,
    exec: `<circle cx="${c}" cy="${cy}" r="2.300" stroke-width="1.300"/>`,
    gauge: `<path d="M${c - 2.5} ${cy + 3}v-2a2.700 2.700 0 0 1 5.400 0v2" stroke-width="1.100" stroke="#c3e8ec"/>`,
    chart: `<path d="M${c - 3} ${cy - 3.5}v6.500h6.500M${c - 1.5} ${cy + 1}l2-2.500 1 1 2-2.500" stroke-width=".8" stroke="#c3e8ec"/>`,
    debug: `<path d="M${c} ${cy - 3.500}v7" stroke-width="3" stroke="#b7ccb2"/>`,
    inject: `<path d="M${c - 3} ${cy - 1.500}h3v-2l3 3.500-3 3.500v-2h-3" stroke-width="1"/>`
  }[o.icon];
  return `<rect x="${x}" y="${y}" width="${x2 - x}" height="${h}" rx="1.800" fill="${color}" stroke="#999" stroke-width=".6"/><rect x="${ix}" y="${y}" width="${iw}" height="${h}" fill="#000" opacity=".07"/><g fill="none" stroke="#fff">${glyph}</g>` +
    `<text x="${tx}" y="${cy + 2}" text-anchor="middle" ${o.it ? 'font-style="italic"' : ''}>${label}</text>`;
}
const ROWS = [
  ['A0', 'AO', 180.5, 212.7, 0, -8, 48], ['CPU', 'CPU', 236.5, 268.5, 0, 0, 55.5], ['GPU', 'GPU', 300, 339.7, 0, 0, 55.5],
  ['PLL', 'PLL', 363.7, 411.5, 0, 0, 48], ['PMIC', 'FAN', 427, 459, 0, 0, 55.5], ['FAN', 'FAN', 498.7, 530.7, 3, 0, 55.5]];
function flow() {
  let wires = '', nodes = '', ports = '';
  ROWS.forEach(([name, parse, cy, dy, off, doff, tw], i) => {
    const tr = i ? 379 : 371.5, px = 394 + off, pr = (i ? 465 : 457) + off, jx = 401.5 + off, jr = 457.5 + off, tx = 488 + off, jy = cy + 16, dx = tx + doff;
    wires += wire(291, 204.3, 323.5, cy) + wire(tr, cy - 5, px, cy) + wire(pr, cy, tx, cy) + wire(jr, jy, tx, jy) +
      `<path d="M${pr} ${cy}c15 0 15 8 0 8H${jx}c-15 0-15 8 0 8"/><path d="M${pr} ${cy}C${pr + 25} ${cy} ${dx - 24} ${dy} ${dx} ${dy}"/>`;
    nodes += node(323.5, tr, cy, 18, '#e9967a', (i ? name : 'AO') + '-therm', { it: 1, icon: 'exec' }) +
      `<rect x="327" y="${cy + 11}" width="4.500" height="4" fill="#f9df31"/><text x="333" y="${cy + 14.8}" fill="#aaa" font-size="4.500">rc:1</text>` +
      node(px, pr, cy, 12, '#fdd0a2', `Parse ${parse}-therm`, { it: 1, icon: 'fx' }) + node(jx, jr, jy, 12, '#fdd0a2', 'Parse JSON', { it: 1, icon: 'fx' }) +
      node(tx, tx + tw, cy, 12, '#76c4cc', `${name} Temp`, { right: 1, icon: 'gauge' }) + node(tx, tx + 39.5, jy, 12, '#76c4cc', 'chart', { right: 1, icon: 'chart' }) +
      `<rect x="${tx + 54 + doff}" y="${dy - 5}" width="11" height="10" rx="2" fill="#e3e3e3" stroke="#bbb" stroke-width=".6"/><rect x="${tx + 57.5 + doff}" y="${dy - 3}" width="6" height="6" rx="1" fill="#87a980"/>` +
      node(dx, dx + 55.5, dy, 12, '#87a980', 'msg.payload', { right: 1, icon: 'debug' });
    ports += port(323.5, cy) + port(tr, cy - 5) + port(tr, cy) + port(tr, cy + 5) + port(px, cy) + port(pr, cy) + port(jx, jy) + port(jr, jy) + port(tx, cy) + port(tx, jy) + port(tx + 39.5, jy) + port(dx, dy);
  });
  nodes += '<rect x="225.500" y="199.300" width="13" height="10" rx="2" fill="#e3e3e3" stroke="#bbb" stroke-width=".6"/><rect x="227.500" y="201.300" width="6" height="6" rx="1" fill="#a6bbcf"/>' + node(235.5, 291, 204.3, 12, '#a6bbcf', 'timestamp ↻', { icon: 'inject' });
  ports += port(291, 204.3);
  return `<g font-family="Liberation Sans, DejaVu Sans, sans-serif" font-size="5.700" fill="#333"><g fill="none" stroke="#999" stroke-width="1.100">${wires}</g>${nodes}${ports}</g>`;
}
const CAN = [[219.5, 157, 1, 1, 0, 0, 8], [319, 838, 1.14, 1.13, -144.6, 660.2, 9.04]];
$$('.canvas').forEach((svg, i) => {
  const [ox, oy, sx, sy, tx, ty, g] = CAN[i];
  svg.innerHTML = `<defs><pattern id="grid${i}" width="${g}" height="${g}" patternUnits="userSpaceOnUse"><path d="M0 .5H${g}M.5 0V${g}" stroke="#f0f0f0" fill="none"/></pattern></defs><rect width="100%" height="100%" fill="url(#grid${i})"/><g transform="translate(${tx - ox} ${ty - oy}) scale(${sx} ${sy})">${flow()}</g>`;
});

/* Dashboard cards */
function trace(id, keys, amp, x0, x1, yOf) {
  let seed = id * 7919 + 13, pts = [];
  const rnd = () => (seed = (seed * 16807) % 2147483647) / 2147483647;
  const n = 420;
  for (let i = 0; i <= n; i++) {
    const t = i / n;
    let k = 0;
    while (k < keys.length - 2 && keys[k + 1][0] < t) k++;
    const [a, va] = keys[k], [b, vb] = keys[k + 1];
    const v = va + (vb - va) * (t - a) / (b - a) + (rnd() - .45) * amp * (rnd() < .08 ? 1.8 : .6);
    pts.push((x0 + (x1 - x0) * t).toFixed(1) + ',' + yOf(v).toFixed(1));
  }
  return `<polyline points="${pts.join(' ')}" fill="none" stroke="#1f77b4" stroke-width="1.900"/>`;
}
const polar = (r, a) => [116 - r * Math.cos(a), 119.5 - r * Math.sin(a)];
function arc(a0, a1, color) {
  const p = [polar(80, a0), polar(80, a1), polar(50, a1), polar(50, a0)].map(q => q.map(v => v.toFixed(2)).join(' '));
  return `<path d="M${p[0]}A80 80 0 0 1 ${p[1]}L${p[2]}A50 50 0 0 0 ${p[3]}Z" fill="${color}"/>`;
}
function card(c, i) {
  const [name, val, color, max, step, xs, labels, keys, amp] = c;
  const a = Math.PI * val / 120, nx = 2.1 * Math.sin(a), ny = -2.1 * Math.cos(a);
  const tip = polar(85, a), b = polar(37, a);
  const y = v => 281.5 - v / max * 85.5;
  const sans = 'font-family="Liberation Sans, sans-serif"', ui = 'font-family="Open Sans, Noto Sans, sans-serif" fill="#111"';
  let s = `<text x="116" y="19.500" text-anchor="middle" ${ui} font-weight="600" font-size="13" textLength="${{ A0: 56, CPU: 66, GPU: 66, PLL: 62, PMIC: 73, FAN: 65 }[name]}" lengthAdjust="spacingAndGlyphs">${name} Temp</text>` +
    arc(0, Math.PI, '#bebebe') + arc(0, a, color) +
    `<path d="M${tip[0]} ${tip[1]}L${b[0] + nx} ${b[1] + ny}L${b[0] - nx} ${b[1] - ny}Z" fill="#111"/>` +
    `<text x="116" y="118" text-anchor="middle" ${ui} font-weight="700" font-size="13.500">${val}</text><g ${sans} fill="#555"><text x="116" y="133.500" text-anchor="middle" font-size="8.500">[ °C ]</text><text x="51.500" y="131" text-anchor="middle" font-size="8.500">0</text><text x="181" y="131" text-anchor="middle" font-size="9.800">120</text></g>` +
    `<text x="116" y="180" text-anchor="middle" ${ui} font-weight="600" font-size="13" textLength="33" lengthAdjust="spacingAndGlyphs">chart</text>`;
  for (let v = 0; v <= max; v += step) {
    s += `<path d="M${xs[0] - 6} ${y(v)}H228" stroke="${v ? '#e8e8e8' : '#ddd'}"/><text x="${xs[0] - 7.5}" y="${y(v) + 2.5}" text-anchor="end" ${sans} font-size="9.800" fill="#444">${v}</text>`;
  }
  xs.forEach((x, k) => { s += `<path d="M${x} 191V288" stroke="${k ? '#e8e8e8' : '#ccc'}"/><text x="${x}" y="296.500" text-anchor="middle" ${sans} font-size="10" fill="#333" textLength="34" lengthAdjust="spacingAndGlyphs">${labels[k]}:00</text>`; });
  s += trace(i + 1, keys, amp, xs[0] + 1, 206.5, y);
  return `<article class="card"><h3>${fit(name, { A0: 17, CPU: 27, GPU: 27, PLL: 23, PMIC: 33, FAN: 26 }[name])}</h3><svg width="233" height="313">${s}</svg></article>`;
}
const flat = v => [[0, v], [1, v]];
const X3 = [29, 117.8, 209.3], XP = [34, 120.5, 209.3];
const T1 = ['13:04', '13:34', '14:05'], T2 = ['16:26', '16:56', '17:27'];
const G = '#66cc2a', O = '#d0722f';
const SETS = {
  first: [
    ['A0', 34.5, '#82d22d', 40, 10, [29, 94, 209.3], ['12:41', '13:11', '14:05'], [[0, 34.6], [.08, 34.8], [.14, 35.4], [.22, 33.6], [.55, 33.2], [.6, 33.8], [.65, 33], [.71, 32.9], [.75, 34.8], [.85, 34], [.95, 33.500], [1, 34.6]], 1.2],
    ['CPU', 29.5, '#6dce2b', 40, 10, X3, T1, [[0, 28], [.58, 27.6], [.65, 29.4], [.8, 28.5], [.98, 28.3], [1, 30]], 2],
    ['GPU', 29, '#6bce2b', 30, 10, X3, T1, [[0, 28], [.35, 27.7], [.42, 28.1], [.57, 27.4], [.65, 28.800], [.7, 29.3], [.75, 28.2], [.8, 28.900], [.95, 28], [1, 29.2]], .7],
    ['PLL', 27.5, G, 30, 10, X3, T1, flat(27), .5], ['PMIC', 100, O, 100, 20, XP, T1, flat(100), 0], ['FAN', 27.5, G, 30, 10, X3, T1, flat(27.5), .7]],
  second: [
    ['A0', 34.5, '#82d22d', 40, 10, [29, 89, 149.5, 209.3], ['12:00', '14:00', '16:00', '18:00'], flat(34), .8], ['CPU', 29.5, '#6dce2b', 40, 10, X3, T2, flat(28), 1], ['GPU', 29, '#6bce2b', 30, 10, X3, T2, flat(28), .5],
    ['PLL', 27.5, G, 30, 10, X3, T2, [[0, 27.1], [.2, 27], [.25, 27.8], [.6, 27.3], [.85, 27.2], [1, 27]], .7], ['PMIC', 100, O, 100, 20, XP, T2, flat(100), 0],
    ['FAN', 27.5, G, 30, 10, X3, T2, [[0, 27.5], [.2, 27.2], [.3, 28], [.45, 27.8], [.97, 27.3], [1, 28.4]], 1.1]]
};
$$('.cards').forEach(el => { el.innerHTML = SETS[el.dataset.cards].map(card).join(''); });

/* Scale each label to its set width */
$$('.fit').forEach(el => {
  const w = +el.dataset.w, natural = el.getBoundingClientRect().width;
  el.style.transform = `scaleX(${w / natural})`;
  el.style.marginRight = `${w - natural}px`;
});
```
